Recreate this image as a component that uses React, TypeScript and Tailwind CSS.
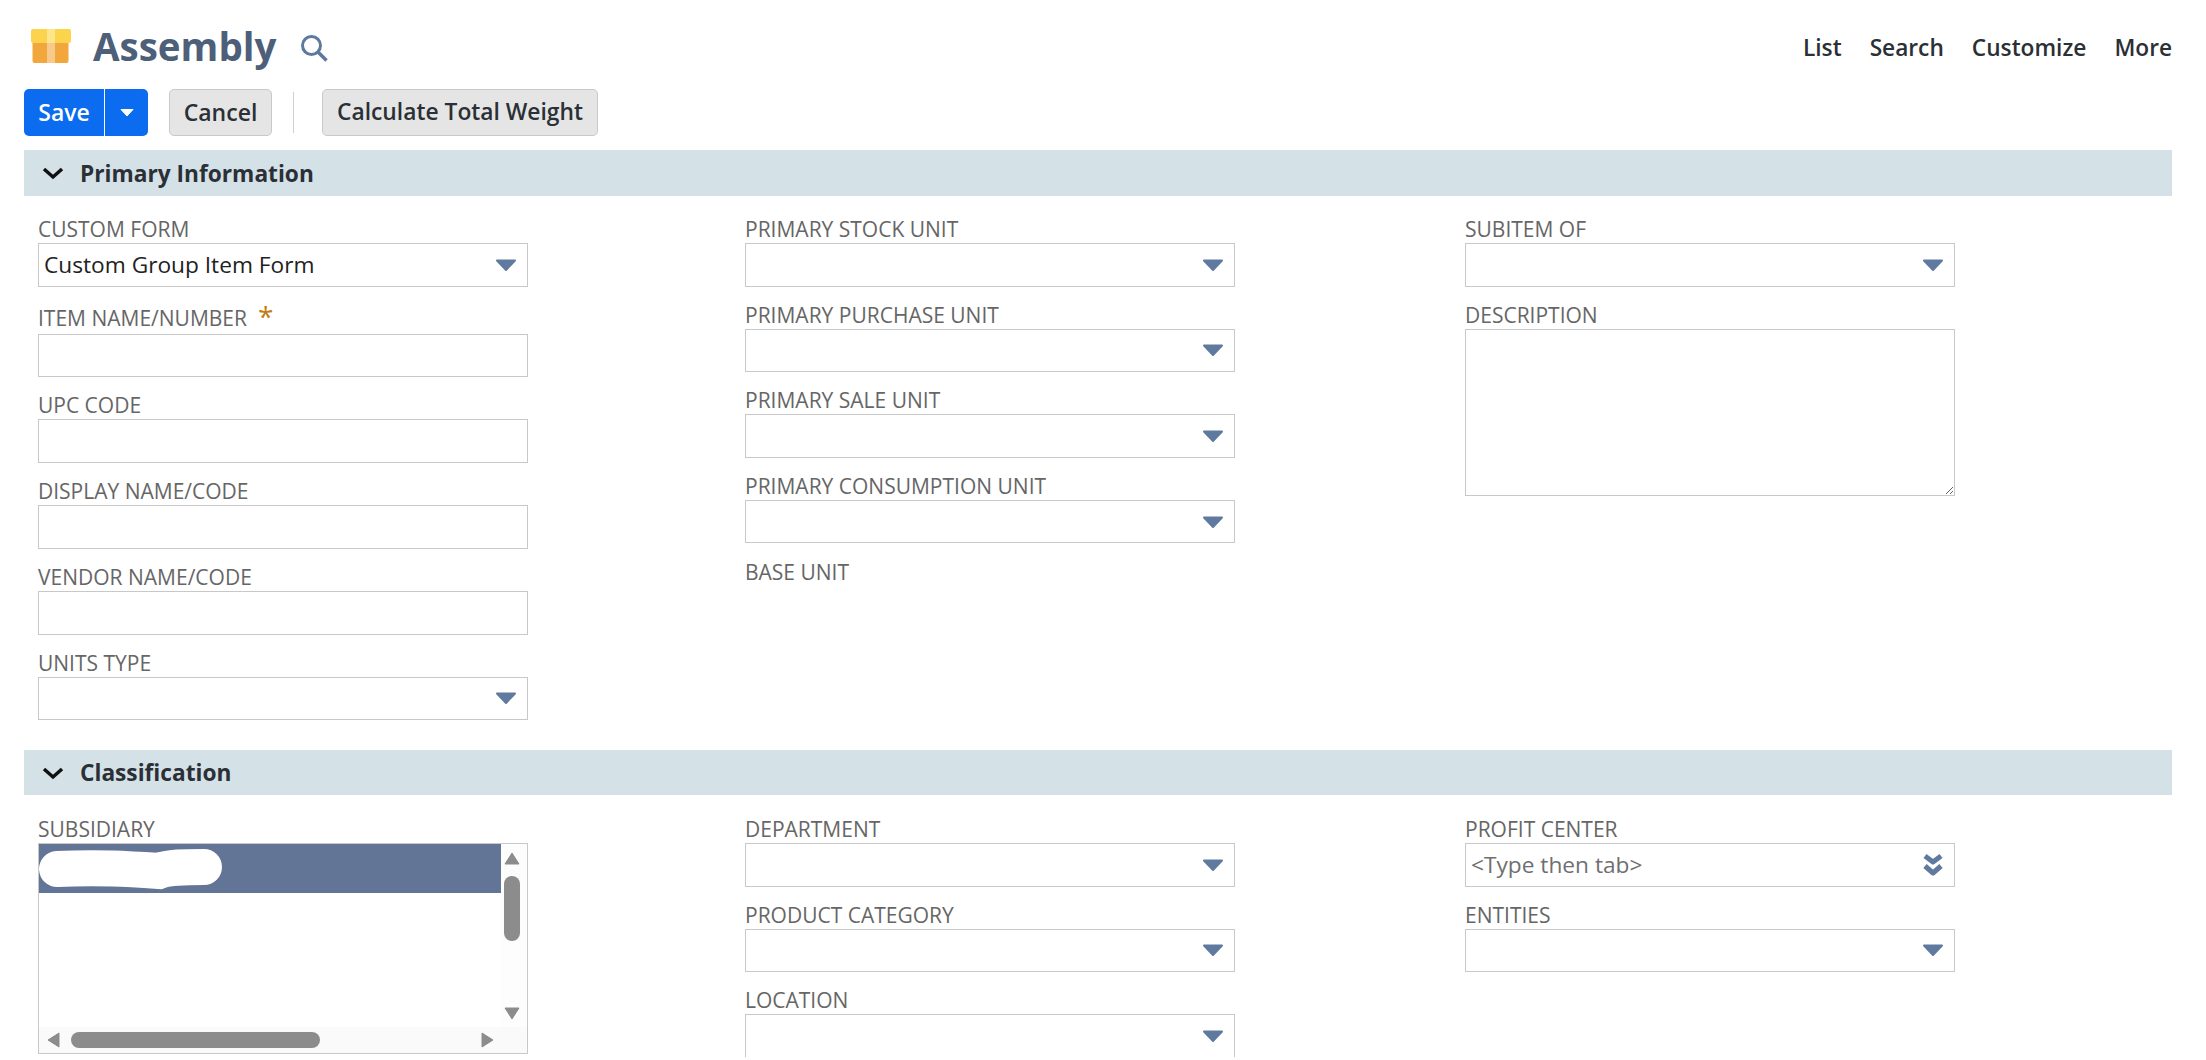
const Caret = () => (
  <svg width="22" height="14" viewBox="0 0 22 14" className="shrink-0">
    <path d="M2 2.5 H20 L11 12 Z" fill="#5f7a9e" stroke="#5f7a9e" strokeWidth="2" strokeLinejoin="round" />
  </svg>
);

const DoubleCaret = () => (
  <svg width="22" height="24" viewBox="0 0 22 24" className="shrink-0">
    <path d="M3 3 L11 9 L19 3 M3 13 L11 20 L19 13" fill="none" stroke="#5f7a9e" strokeWidth="5" strokeLinejoin="round" />
  </svg>
);

const Chevron = () => (
  <svg width="22" height="14" viewBox="0 0 22 14" className="shrink-0">
    <path d="M2 3 L11 11 L20 3" fill="none" stroke="#111" strokeWidth="3.5" />
  </svg>
);

function Section({ title, short }: { title: string; short?: boolean }) {
  return (
    <div className={`flex items-center gap-[16px] bg-[#d4e2e8] pl-[18px] text-[22.7px] leading-[24px] font-bold text-[#2b2f36] ${short ? "h-[45px]" : "h-[46px]"}`}>
      <Chevron />
      <span className="pt-[1px]">{title}</span>
    </div>
  );
}

function Label({ children, tall }: { children: React.ReactNode; tall?: boolean }) {
  return <div className={`text-[21px] text-[#666666] whitespace-nowrap ${tall ? "h-[32px] leading-[32px]" : "h-[27px] leading-[27px]"}`}>{children}</div>;
}

function Select({ label, value }: { label: string; value?: string }) {
  return (
    <div>
      <Label>{label}</Label>
      <div className="flex h-[43.5px] items-center justify-between border border-[#c8c8c8] pr-[10px] pl-[5px] text-[22.7px] text-[#222222]">
        <span>{value}</span>
        <Caret />
      </div>
    </div>
  );
}

function Field({ label, required }: { label: string; required?: boolean }) {
  return (
    <div>
      <Label tall={required}>
        {label}
        {required && <span className="ml-[11px] align-[-1px] text-[28px] leading-none text-[#c07f12]">*</span>}
      </Label>
      <input className={`block w-full border border-[#c8c8c8] outline-none ${required ? "h-[43px]" : "h-[44px]"}`} />
    </div>
  );
}

function Listbox() {
  return (
    <div>
      <Label>SUBSIDIARY</Label>
      <div className="flex h-[211px] flex-col border border-[#c8c8c8] bg-white">
        <div className="flex min-h-0 flex-1">
          <div className="flex-1">
            <div className="flex h-[49px] items-center bg-[#627596]">
              <svg width="184" height="42" viewBox="0 0 184 42" className="shrink-0">
                <path d="M18 21 C60 19 90 21 120 23 C130 19 145 19 165 19" fill="none" stroke="#fff" strokeWidth="36" strokeLinecap="round" />
              </svg>
            </div>
          </div>
          <div className="flex w-[26px] flex-col items-center bg-[#fdfdfd] pt-[8px] pr-[4px]">
            <svg width="16" height="13" viewBox="0 0 16 13"><path d="M1 12 H15 L8 1 Z" fill="#8c8c8c" stroke="#8c8c8c" strokeLinejoin="round" /></svg>
            <div className="mt-[11px] h-[65px] w-[16px] rounded-full bg-[#8c8c8c]" />
            <div className="mt-auto mb-[7px]">
              <svg width="16" height="13" viewBox="0 0 16 13"><path d="M1 1 H15 L8 12 Z" fill="#8c8c8c" stroke="#8c8c8c" strokeLinejoin="round" /></svg>
            </div>
          </div>
        </div>
        <div className="flex h-[26px] items-center bg-[#fafafa] pr-[33px] pl-[8px]">
          <svg width="13" height="16" viewBox="0 0 13 16"><path d="M12 1 V15 L1 8 Z" fill="#8c8c8c" stroke="#8c8c8c" strokeLinejoin="round" /></svg>
          <div className="ml-[11px] h-[16px] w-[249px] rounded-full bg-[#8c8c8c]" />
          <div className="ml-auto">
            <svg width="13" height="16" viewBox="0 0 13 16"><path d="M1 1 V15 L12 8 Z" fill="#8c8c8c" stroke="#8c8c8c" strokeLinejoin="round" /></svg>
          </div>
        </div>
      </div>
    </div>
  );
}

export default function App() {
  return (
    <div className="h-[1057px] overflow-hidden bg-white pr-[34px] pl-[24px] font-['Open_Sans',sans-serif]">
      <header className="flex h-[89px] items-start justify-between">
        <div className="flex items-center pt-[24px] pl-[7px]">
          <svg width="40" height="36" viewBox="0 0 40 36" className="shrink-0">
            <rect x="1.5" y="10" width="36" height="25" rx="2" fill="#f1a73c" />
            <rect x="0" y="1" width="40" height="14" rx="2" fill="#fcd34d" />
            <rect x="16" y="1" width="8" height="14" fill="#fde68a" />
            <rect x="16" y="15" width="8" height="20" fill="#f7c98a" />
          </svg>
          <h1 className="ml-[22px] text-[38.5px] leading-[44px] font-bold text-[#4d5f79]">Assembly</h1>
          <svg width="28" height="28" viewBox="0 0 28 28" className="mt-[4px] ml-[24px]">
            <circle cx="11.5" cy="11.5" r="9" fill="none" stroke="#5d7a9c" strokeWidth="3" />
            <path d="M18 18 L26.5 26.5" stroke="#5d7a9c" strokeWidth="3.5" />
          </svg>
        </div>
        <nav className="flex gap-[28px] pt-[34px] text-[22.7px] leading-[28px] font-semibold text-[#2b2f36]">
          <span>List</span>
          <span>Search</span>
          <span>Customize</span>
          <span>More</span>
        </nav>
      </header>

      <div className="flex h-[47px] items-center">
        <div className="flex h-[47px] w-[124px] items-center rounded-[5px] bg-[#0b6cf0] text-[23px] font-semibold text-white">
          <span className="w-[80px] text-center">Save</span>
          <span className="h-full w-px bg-white" />
          <span className="flex flex-1 justify-center">
            <svg width="14" height="9" viewBox="0 0 14 9"><path d="M1 1.5 H13 L7 8 Z" fill="#fff" stroke="#fff" strokeLinejoin="round" /></svg>
          </span>
        </div>
        <button className="ml-[21px] h-[47px] w-[103px] rounded-[5px] border border-[#c9c9c9] bg-[#e5e5e5] text-[23px] font-semibold text-[#2b2f36]">Cancel</button>
        <span className="mr-[28px] ml-[21px] h-[41px] w-px bg-[#cfcfcf]" />
        <button className="h-[47px] w-[276px] rounded-[5px] border border-[#c9c9c9] bg-[#e5e5e5] text-[22.8px] font-semibold text-[#2b2f36]">Calculate Total Weight</button>
      </div>

      <div className="mt-[14px]">
        <Section title="Primary Information" />
        <div className="grid h-[554px] grid-cols-[707px_720px_490px] content-start pt-[20px] pl-[14px]">
          <div className="flex w-[490px] flex-col gap-[15px]">
            <Select label="CUSTOM FORM" value="Custom Group Item Form" />
            <Field label="ITEM NAME/NUMBER" required />
            <Field label="UPC CODE" />
            <Field label="DISPLAY NAME/CODE" />
            <Field label="VENDOR NAME/CODE" />
            <Select label="UNITS TYPE" />
          </div>
          <div className="flex w-[490px] flex-col gap-[15.17px]">
            <Select label="PRIMARY STOCK UNIT" />
            <Select label="PRIMARY PURCHASE UNIT" />
            <Select label="PRIMARY SALE UNIT" />
            <Select label="PRIMARY CONSUMPTION UNIT" />
            <Label>BASE UNIT</Label>
          </div>
          <div className="flex flex-col gap-[15.5px]">
            <Select label="SUBITEM OF" />
            <div>
              <Label>DESCRIPTION</Label>
              <textarea className="block h-[167px] w-full resize border border-[#c8c8c8] outline-none" />
            </div>
          </div>
        </div>
      </div>

      <div>
        <Section title="Classification" short />
        <div className="grid grid-cols-[707px_720px_490px] pt-[21px] pl-[14px]">
          <div className="w-[490px]">
            <Listbox />
          </div>
          <div className="flex w-[490px] flex-col gap-[15px]">
            <Select label="DEPARTMENT" />
            <Select label="PRODUCT CATEGORY" />
            <Select label="LOCATION" />
          </div>
          <div className="flex flex-col gap-[15px]">
            <div>
              <Label>PROFIT CENTER</Label>
              <div className="flex h-[43.5px] items-center justify-between border border-[#c8c8c8] pr-[10px] pl-[5px] text-[22.7px] text-[#6f6f6f]">
                <span>&lt;Type then tab&gt;</span>
                <DoubleCaret />
              </div>
            </div>
            <Select label="ENTITIES" />
          </div>
        </div>
      </div>
    </div>
  );
}
